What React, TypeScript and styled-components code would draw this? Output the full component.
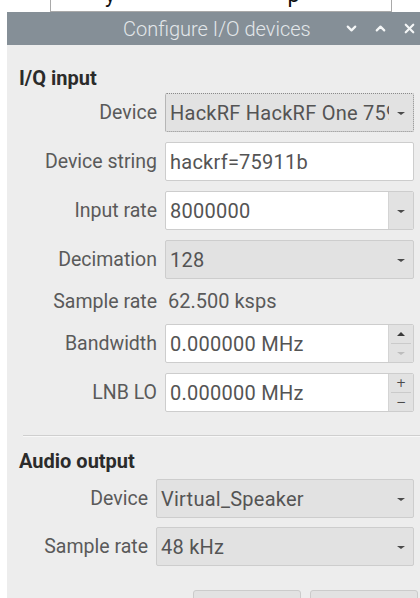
import React from "react";
import styled, { createGlobalStyle } from "styled-components";
import { ChevronDown, ChevronUp, X } from "lucide-react";

const GlobalStyle = createGlobalStyle`
   html, body {
      margin: 0;
      padding: 0;
      background: #ffffff;
      overflow: hidden;
   }
   body {
      font-family: Roboto, "Liberation Sans", sans-serif;
      width: 420px;
      height: 598px;
   }
`;

// the edge of the window underneath, peeking out above this one
const BackdropField = styled.div`
   margin-left: 50px;
   width: 340px;
   height: 11px;
   border: 1px solid #a9a9a9;
   border-top: none;
   background: #ffffff;
   overflow: hidden;
   display: flex;
`;

const BackdropGlyph = styled.span<{ $left: number }>`
   margin-left: ${({ $left }) => $left}px;
   margin-top: -16px;
   font-size: 22px;
   line-height: 22px;
   color: #111;
`;

const Window = styled.div`
   margin-left: 7px;
   width: 413px;
   height: 586px;
   background: #ededed;
   overflow: hidden;
   display: flex;
   flex-direction: column;
`;

const TitleBar = styled.div`
   height: 33px;
   flex-shrink: 0;
   background: #858f97;
   display: flex;
   align-items: center;
   padding-left: 116px;
   color: #e3e7ea;
   overflow: hidden;
`;

const Title = styled.div`
   flex-shrink: 0;
   font-size: 20px;
   font-weight: 300;
   width: 214px;
   white-space: nowrap;
`;

const TitleButton = styled.div`
   flex-shrink: 0;
   width: 29px;
   display: flex;
   justify-content: center;
   color: #f4f6f7;
`;

const Body = styled.div`
   padding: 21px 0 0 12px;
   display: flex;
   flex-direction: column;
`;

const Heading = styled.div<{ $gap: number }>`
   font-size: 20px;
   font-weight: 700;
   color: #2b2b2b;
   line-height: 24px;
   margin-bottom: ${({ $gap }) => $gap}px;
`;

const Form = styled.div<{ $labelWidth: number; $gap: number }>`
   display: grid;
   grid-template-columns: ${({ $labelWidth }) => $labelWidth}px ${({ $labelWidth }) => 387 - $labelWidth}px;
   column-gap: 8px;
   row-gap: ${({ $gap }) => $gap}px;
   align-items: center;
`;

const Label = styled.div`
   text-align: right;
   font-size: 19.5px;
   color: #5a5a5a;
   white-space: nowrap;
`;

const Value = styled.div`
   font-size: 20px;
   color: #5a5a5a;
   padding-left: 3px;
   height: 25px;
   line-height: 25px;
`;

const Field = styled.div<{ $editable?: boolean; $focused?: boolean }>`
   height: 39px;
   box-sizing: border-box;
   border: 1px ${({ $focused }) => ($focused ? "dotted #8a8a8a" : "solid #cdcdcd")};
   border-radius: 2px;
   background: ${({ $editable }) => ($editable ? "#ffffff" : "#e2e2e2")};
   display: flex;
   align-items: stretch;
   overflow: hidden;
`;

const FieldText = styled.div`
   flex: 1;
   min-width: 0;
   display: flex;
   align-items: center;
   padding-left: 4px;
   font-size: 20px;
   letter-spacing: 0.25px;
   color: #545454;
   white-space: nowrap;
   overflow: hidden;
`;

const ArrowCell = styled.div<{ $framed?: boolean }>`
   width: 24px;
   flex-shrink: 0;
   display: flex;
   align-items: center;
   justify-content: center;
   background: ${({ $framed }) => ($framed ? "#e2e2e2" : "transparent")};
   border-left: ${({ $framed }) => ($framed ? "1px solid #d4d4d4" : "none")};
`;

const DownArrow = styled.div`
   width: 0;
   height: 0;
   border-left: 4px solid transparent;
   border-right: 4px solid transparent;
   border-top: 3px solid #4a4a4a;
   margin-top: 2px;
`;

const SpinCell = styled.div`
   width: 24px;
   flex-shrink: 0;
   background: #e2e2e2;
   border-left: 1px solid #d4d4d4;
   display: flex;
   flex-direction: column;
`;

const SpinHalf = styled.div<{ $top?: boolean }>`
   flex: 1;
   display: flex;
   align-items: center;
   justify-content: center;
   font-family: "DejaVu Sans", sans-serif;
   font-size: 12px;
   line-height: 1;
   color: #4a4a4a;
   border-bottom: ${({ $top }) => ($top ? "1px solid #cacaca" : "none")};
   margin: ${({ $top }) => ($top ? "0 2px" : "0")};
`;

const Triangle = styled.div<{ $up?: boolean; $dim?: boolean }>`
   width: 0;
   height: 0;
   border-left: 4px solid transparent;
   border-right: 4px solid transparent;
   ${({ $up, $dim }) =>
      $up
         ? `border-bottom: 4px solid ${$dim ? "#bdbdbd" : "#3a3a3a"};`
         : `border-top: 3px solid ${$dim ? "#bdbdbd" : "#3a3a3a"};`}
`;

const Separator = styled.div`
   height: 1px;
   background: #cfcfcf;
   margin: 23px 0 12px 4px;
   border-bottom: 1px solid #f8f8f8;
`;

const ButtonRow = styled.div`
   display: flex;
   gap: 9px;
   padding-left: 174px;
   margin-top: 24px;
`;

const DialogButton = styled.div`
   width: 108px;
   height: 32px;
   box-sizing: border-box;
   border: 1px solid #cbcbcb;
   border-radius: 3px;
   background: #e2e2e2;
`;

type ComboProps = {
   text: string;
   editable?: boolean;
   focused?: boolean;
};

function Combo({ text, editable, focused }: ComboProps) {
   return (
      <Field $editable={editable} $focused={focused}>
         <FieldText>{text}</FieldText>
         <ArrowCell $framed={editable}>
            <DownArrow />
         </ArrowCell>
      </Field>
   );
}

function SpinBox({ text, signs }: { text: string; signs?: boolean }) {
   return (
      <Field $editable>
         <FieldText>{text}</FieldText>
         <SpinCell>
            {signs ? (
               <>
                  <SpinHalf $top>+</SpinHalf>
                  <SpinHalf>−</SpinHalf>
               </>
            ) : (
               <>
                  <SpinHalf $top><Triangle $up /></SpinHalf>
                  <SpinHalf><Triangle $dim /></SpinHalf>
               </>
            )}
         </SpinCell>
      </Field>
   );
}

export default function App() {
   return (
      <>
         <GlobalStyle />
         <BackdropField>
            <BackdropGlyph $left={54}>y</BackdropGlyph>
            <BackdropGlyph $left={172}>p</BackdropGlyph>
         </BackdropField>

         <Window>
            <TitleBar>
               <Title>Configure I/O devices</Title>
               <TitleButton><ChevronDown size={15} strokeWidth={3.5} /></TitleButton>
               <TitleButton><ChevronUp size={15} strokeWidth={3.5} /></TitleButton>
               <TitleButton><X size={15} strokeWidth={3.5} /></TitleButton>
            </TitleBar>

            <Body>
               <Heading $gap={3}>I/Q input</Heading>
               <Form $labelWidth={138} $gap={10}>
                  <Label>Device</Label>
                  <Combo text="HackRF HackRF One 75911b" focused />

                  <Label>Device string</Label>
                  <Field $editable><FieldText>hackrf=75911b</FieldText></Field>

                  <Label>Input rate</Label>
                  <Combo text="8000000" editable />

                  <Label>Decimation</Label>
                  <Combo text="128" />

                  <Label>Sample rate</Label>
                  <Value>62.500 ksps</Value>

                  <Label>Bandwidth</Label>
                  <SpinBox text="0.000000 MHz" />

                  <Label>LNB LO</Label>
                  <SpinBox text="0.000000 MHz" signs />
               </Form>

               <Separator />

               <Heading $gap={6}>Audio output</Heading>
               <Form $labelWidth={129} $gap={9}>
                  <Label>Device</Label>
                  <Combo text="Virtual_Speaker" />

                  <Label>Sample rate</Label>
                  <Combo text="48 kHz" />
               </Form>

               <ButtonRow>
                  <DialogButton />
                  <DialogButton />
               </ButtonRow>
            </Body>
         </Window>
      </>
   );
}
